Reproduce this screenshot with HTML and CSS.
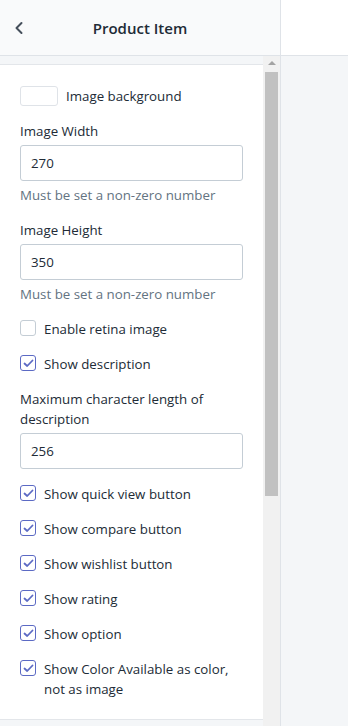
FILE: index.html
```html
<!DOCTYPE html>
<html lang="en">
<head>
    <meta charset="UTF-8">
    <meta name="viewport" content="width=device-width, initial-scale=1.0">
    <title>Product Item</title>
    <link rel="stylesheet" href="styles.css">
</head>
<body>
<div class="app">
    <div class="sidebar">
        <div class="header">
            <span class="back">
                <svg width="10" height="14" viewBox="0 0 10 14"><path d="M7.5 2 L2.5 7 L7.5 12" fill="none" stroke="#454f5b" stroke-width="2" stroke-linecap="round" stroke-linejoin="round"/></svg>
            </span>
            <h2 class="title">Product Item</h2>
        </div>
        <div class="body">
            <div class="scroll">
                <div class="card">
                    <div class="swatch-row">
                        <span class="swatch"></span>
                        <span>Image background</span>
                    </div>

                    <div class="field">
                        <label for="width">Image Width</label>
                        <input type="text" id="width" value="270" />
                        <div class="help">Must be set a non-zero number</div>
                    </div>

                    <div class="field">
                        <label for="height">Image Height</label>
                        <input type="text" id="height" value="350" />
                        <div class="help">Must be set a non-zero number</div>
                    </div>

                    <div class="check">
                        <span class="box"></span>
                        <span>Enable retina image</span>
                    </div>
                    <div class="check">
                        <span class="box checked"><svg width="11" height="9" viewBox="0 0 11 9"><path d="M1.5 4.5 L4.2 7 L9.5 1.5" fill="none" stroke="#5c6ac4" stroke-width="1.8" stroke-linecap="round" stroke-linejoin="round"/></svg></span>
                        <span>Show description</span>
                    </div>

                    <div class="field">
                        <label for="maxlen">Maximum character length of description</label>
                        <input type="text" id="maxlen" value="256" />
                    </div>

                    <div class="check">
                        <span class="box checked"><svg width="11" height="9" viewBox="0 0 11 9"><path d="M1.5 4.5 L4.2 7 L9.5 1.5" fill="none" stroke="#5c6ac4" stroke-width="1.8" stroke-linecap="round" stroke-linejoin="round"/></svg></span>
                        <span>Show quick view button</span>
                    </div>
                    <div class="check">
                        <span class="box checked"><svg width="11" height="9" viewBox="0 0 11 9"><path d="M1.5 4.5 L4.2 7 L9.5 1.5" fill="none" stroke="#5c6ac4" stroke-width="1.8" stroke-linecap="round" stroke-linejoin="round"/></svg></span>
                        <span>Show compare button</span>
                    </div>
                    <div class="check">
                        <span class="box checked"><svg width="11" height="9" viewBox="0 0 11 9"><path d="M1.5 4.5 L4.2 7 L9.5 1.5" fill="none" stroke="#5c6ac4" stroke-width="1.8" stroke-linecap="round" stroke-linejoin="round"/></svg></span>
                        <span>Show wishlist button</span>
                    </div>
                    <div class="check">
                        <span class="box checked"><svg width="11" height="9" viewBox="0 0 11 9"><path d="M1.5 4.5 L4.2 7 L9.5 1.5" fill="none" stroke="#5c6ac4" stroke-width="1.8" stroke-linecap="round" stroke-linejoin="round"/></svg></span>
                        <span>Show rating</span>
                    </div>
                    <div class="check">
                        <span class="box checked"><svg width="11" height="9" viewBox="0 0 11 9"><path d="M1.5 4.5 L4.2 7 L9.5 1.5" fill="none" stroke="#5c6ac4" stroke-width="1.8" stroke-linecap="round" stroke-linejoin="round"/></svg></span>
                        <span>Show option</span>
                    </div>
                    <div class="check">
                        <span class="box checked"><svg width="11" height="9" viewBox="0 0 11 9"><path d="M1.5 4.5 L4.2 7 L9.5 1.5" fill="none" stroke="#5c6ac4" stroke-width="1.8" stroke-linecap="round" stroke-linejoin="round"/></svg></span>
                        <span>Show Color Available as color, not as image</span>
                    </div>
                </div>
            </div>
            <div class="scrollbar">
                <div class="arrow"></div>
                <div class="thumb"></div>
            </div>
        </div>
    </div>
    <div class="main">
        <div class="main-top"></div>
    </div>
</div>
</body>
</html>
```

FILE: styles.css
```css
body {
    font-family: "Open Sans", "Noto Sans", sans-serif;
    font-size: 13.3px;
    line-height: 20px;
    color: #212b36;
    margin: 0;
    padding: 0;
}

.app {
    display: flex;
    height: 726px;
    overflow: hidden;
}

.sidebar {
    width: 280px;
    flex: none;
    display: flex;
    flex-direction: column;
    border-right: 1px solid #dfe3e8;
}

.header {
    height: 56px;
    box-sizing: border-box;
    background-color: #f9fafb;
    border-bottom: 1px solid #dfe3e8;
    display: flex;
    align-items: center;
    padding: 0 0 0 14px;
}

.back {
    width: 10px;
    height: 14px;
    display: flex;
}

.title {
    flex: 1;
    margin: 0 24px 0 0;
    text-align: center;
    font-size: 15px;
    font-weight: 600;
}

.body {
    flex: 1;
    display: flex;
    background-color: #f4f6f8;
    min-height: 0;
}

.scroll {
    flex: 1;
    padding-top: 8px;
}

.card {
    background-color: #fff;
    border-top: 1px solid #e3e6ea;
    border-bottom: 1px solid #e3e6ea;
    padding: 21px 20px 20px;
    display: flex;
    flex-direction: column;
    gap: 15px;
}

.swatch-row {
    display: flex;
    align-items: center;
    gap: 8px;
}

.swatch {
    width: 36px;
    height: 18px;
    border: 1px solid #dfe3e8;
    border-radius: 3px;
}

.field {
    display: flex;
    flex-direction: column;
    gap: 4px;
}

.field input {
    height: 36px;
    box-sizing: border-box;
    width: 100%;
    border: 1px solid #c4cdd5;
    border-radius: 3px;
    padding: 0 10px;
    font: inherit;
    color: #212b36;
}

.help {
    color: #637381;
}

.check {
    display: flex;
    align-items: flex-start;
    gap: 8px;
}

.box {
    width: 16px;
    height: 16px;
    flex: none;
    margin-top: 1px;
    box-sizing: border-box;
    border: 1px solid #c4cdd5;
    border-radius: 3px;
    display: flex;
    align-items: center;
    justify-content: center;
}

.box.checked {
    border-color: #5c6ac4;
}

.scrollbar {
    width: 17px;
    flex: none;
    background-color: #f1f1f1;
    display: flex;
    flex-direction: column;
    align-items: center;
}

.arrow {
    margin-top: 5px;
    width: 0;
    height: 0;
    border-left: 4px solid transparent;
    border-right: 4px solid transparent;
    border-bottom: 4px solid #a3a3a3;
}

.thumb {
    margin-top: 7px;
    width: 13px;
    height: 424px;
    background-color: #c1c1c1;
}

.main {
    flex: 1;
    background-color: #f4f6f8;
}

.main-top {
    height: 56px;
    box-sizing: border-box;
    background-color: #fff;
    border-bottom: 1px solid #dfe3e8;
}
```
